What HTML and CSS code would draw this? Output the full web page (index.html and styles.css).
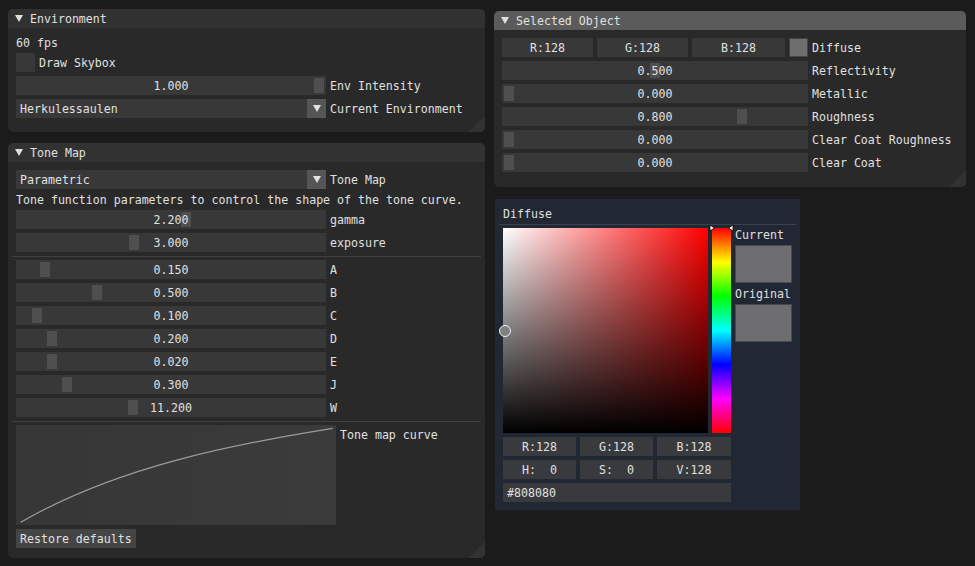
FILE: index.html
```html
<!DOCTYPE html>
<html>
<head>
<meta charset="utf-8">
<link rel="stylesheet" href="styles.css">
</head>
<body>
<div class="win env">
  <div class="title"><span class="tri"></span><span class="ttext">Environment</span></div>
  <div class="content">
    <div class="text">60 fps</div>
    <div class="row"><div class="frame check"></div><span class="label">Draw Skybox</span></div>
    <div class="row"><div class="frame slider w310"><div class="grab" style="left:298px"></div><span class="val">1.000</span></div><span class="label">Env Intensity</span></div>
    <div class="row"><div class="frame combo w310"><span class="ctext">Herkulessaulen</span><span class="arrow"><span class="tri"></span></span></div><span class="label">Current Environment</span></div>
  </div>
</div>

<div class="win tone">
  <div class="title"><span class="tri"></span><span class="ttext">Tone Map</span></div>
  <div class="content">
    <div class="row"><div class="frame combo w310"><span class="ctext">Parametric</span><span class="arrow"><span class="tri"></span></span></div><span class="label">Tone Map</span></div>
    <div class="text">Tone function parameters to control the shape of the tone curve.</div>
    <div class="row"><div class="frame slider w310"><div class="grab" style="left:165px"></div><span class="val">2.200</span></div><span class="label">gamma</span></div>
    <div class="row"><div class="frame slider w310"><div class="grab" style="left:113px"></div><span class="val">3.000</span></div><span class="label">exposure</span></div>
    <div class="sep"></div>
    <div class="row"><div class="frame slider w310"><div class="grab" style="left:24px"></div><span class="val">0.150</span></div><span class="label">A</span></div>
    <div class="row"><div class="frame slider w310"><div class="grab" style="left:76px"></div><span class="val">0.500</span></div><span class="label">B</span></div>
    <div class="row"><div class="frame slider w310"><div class="grab" style="left:16px"></div><span class="val">0.100</span></div><span class="label">C</span></div>
    <div class="row"><div class="frame slider w310"><div class="grab" style="left:31px"></div><span class="val">0.200</span></div><span class="label">D</span></div>
    <div class="row"><div class="frame slider w310"><div class="grab" style="left:31px"></div><span class="val">0.020</span></div><span class="label">E</span></div>
    <div class="row"><div class="frame slider w310"><div class="grab" style="left:46px"></div><span class="val">0.300</span></div><span class="label">J</span></div>
    <div class="row"><div class="frame slider w310"><div class="grab" style="left:112px"></div><span class="val">11.200</span></div><span class="label">W</span></div>
    <div class="sep"></div>
    <div class="plotrow">
      <div class="plot">
        <svg width="320" height="100" viewBox="0 0 320 100"><path d="M4.7,97.3 C100,42 216.7,19.3 316.7,3.3" fill="none" stroke="#9b9b9b" stroke-width="1.2"/></svg>
      </div>
      <span class="plotlabel">Tone map curve</span>
    </div>
    <div class="row"><div class="button">Restore defaults</div></div>
  </div>
</div>

<div class="win sel">
  <div class="title"><span class="tri"></span><span class="ttext">Selected Object</span></div>
  <div class="content">
    <div class="row">
      <div class="rgb">
        <div class="frame num w91">R:128</div>
        <div class="frame num w91">G:128</div>
        <div class="frame num w93">B:128</div>
        <div class="swatch-sm"></div>
      </div>
      <span class="label">Diffuse</span>
    </div>
    <div class="row"><div class="frame slider w306"><div class="grab" style="left:148px"></div><span class="val">0.500</span></div><span class="label">Reflectivity</span></div>
    <div class="row"><div class="frame slider w306"><div class="grab" style="left:2px"></div><span class="val">0.000</span></div><span class="label">Metallic</span></div>
    <div class="row"><div class="frame slider w306"><div class="grab" style="left:235px"></div><span class="val">0.800</span></div><span class="label">Roughness</span></div>
    <div class="row"><div class="frame slider w306"><div class="grab" style="left:2px"></div><span class="val">0.000</span></div><span class="label">Clear Coat Roughness</span></div>
    <div class="row"><div class="frame slider w306"><div class="grab" style="left:2px"></div><span class="val">0.000</span></div><span class="label">Clear Coat</span></div>
  </div>
</div>

<div class="popup">
  <div class="text">Diffuse</div>
  <div class="psep"></div>
  <div class="picker">
    <div class="sv"><div class="cursor"></div></div>
    <div class="hue">
      <svg class="markers" width="25" height="8" viewBox="0 0 25 8">
        <polygon points="1,1 5.5,4 1,7" fill="#fff" stroke="#000" stroke-width="0.8"/>
        <polygon points="24,1 19.5,4 24,7" fill="#fff" stroke="#000" stroke-width="0.8"/>
      </svg>
    </div>
    <div class="side">
      <div class="text">Current</div>
      <div class="swatch"></div>
      <div class="text">Original</div>
      <div class="swatch"></div>
    </div>
  </div>
  <div class="prow">
    <div class="pframe num w73">R:128</div>
    <div class="pframe num w73">G:128</div>
    <div class="pframe num w74">B:128</div>
  </div>
  <div class="prow">
    <div class="pframe num w73">H:  0</div>
    <div class="pframe num w73">S:  0</div>
    <div class="pframe num w74">V:128</div>
  </div>
  <div class="pframe hex">#808080</div>
</div>
</body>
</html>
```

FILE: styles.css
```css
* { box-sizing: border-box; }
html, body { margin: 0; padding: 0; }
body {
  width: 975px;
  height: 566px;
  background: #1b1b1b;
  font-family: "DejaVu Sans Mono", "Liberation Mono", monospace;
  font-size: 11.6px;
  color: #e0e0e0;
  position: relative;
  overflow: hidden;
}

.win {
  position: absolute;
  background: #292929;
  border-radius: 5px;
  overflow: hidden;
}
.win::after {
  content: "";
  position: absolute;
  right: 0;
  bottom: 0;
  width: 16px;
  height: 16px;
  background: linear-gradient(135deg, transparent 50%, #323232 50%);
}
.env { left: 8px; top: 9px; width: 477px; height: 123px; }
.tone { left: 8px; top: 143px; width: 477px; height: 415px; }
.sel { left: 494px; top: 11px; width: 472px; height: 176px; }

.title {
  height: 19px;
  line-height: 19px;
  background: #313131;
  display: flex;
  align-items: center;
  padding-left: 7px;
  gap: 7px;
  white-space: pre;
}
.tone .title { background: #323232; }
.sel .title { background: #5b5b5b; }
.ttext { position: relative; top: 1px; }

.tri {
  display: block;
  width: 0;
  height: 0;
  border-left: 4px solid transparent;
  border-right: 4px solid transparent;
  border-top: 7px solid #e0e0e0;
}

.content {
  padding: 8px;
  display: flex;
  flex-direction: column;
  gap: 4px;
}
.text { height: 13px; line-height: 13px; padding-top: 1px; white-space: pre; }
.row { display: flex; gap: 4px; align-items: center; height: 19px; }
.label { line-height: 19px; white-space: pre; position: relative; top: 1px; }

.frame {
  background: #383838;
  height: 19px;
  line-height: 19px;
  position: relative;
  white-space: pre;
}
.w310 { width: 310px; }
.w306 { width: 306px; }
.w91 { width: 91px; }
.w93 { width: 93px; }
.w73 { width: 73px; }
.w74 { width: 74px; }

.check { width: 19px; }

.slider { text-align: center; }
.grab {
  position: absolute;
  top: 2px;
  width: 10px;
  height: 15px;
  background: #4f4f4f;
}
.val { position: relative; top: 1px; }

.combo { display: flex; justify-content: space-between; }
.ctext { padding-left: 4px; position: relative; top: 1px; }
.arrow {
  width: 19px;
  height: 19px;
  background: #555555;
  display: flex;
  align-items: center;
  justify-content: center;
}
.arrow .tri {
  border-left-width: 4.5px;
  border-right-width: 4.5px;
  border-top-width: 7px;
}

.sep {
  height: 1px;
  background: #3f3f3f;
  margin: 0 -4px -1px;
}

.plotrow { display: flex; gap: 4px; height: 100px; }
.plot {
  width: 320px;
  height: 100px;
  background: linear-gradient(to right, #363636, #3b3b3b);
}
.plot svg { display: block; }
.plotlabel { padding-top: 4px; line-height: 13px; white-space: pre; }

.button {
  height: 19px;
  line-height: 19px;
  padding: 1px 4px 0;
  background: #454545;
  white-space: pre;
}

.rgb { display: flex; gap: 4px; }
.num { text-align: center; padding-top: 1px; }
.swatch-sm {
  width: 19px;
  height: 19px;
  background: #6e6e6e;
  border: 1px solid #444;
}

.popup {
  position: absolute;
  left: 495px;
  top: 199px;
  width: 305px;
  height: 311px;
  background: #212733;
  padding: 8px;
  display: flex;
  flex-direction: column;
  gap: 4px;
}
.psep {
  height: 1px;
  background: #3a4150;
  margin: 0 -4px -1px;
}
.picker { display: flex; gap: 4px; height: 205px; }
.sv {
  width: 205px;
  height: 205px;
  position: relative;
  background:
    linear-gradient(to top, #000, rgba(0,0,0,0)),
    linear-gradient(to right, #fff, #f00);
}
.cursor {
  position: absolute;
  left: -4px;
  top: 97px;
  width: 12px;
  height: 12px;
  border-radius: 50%;
  border: 1.5px solid #f2f2f2;
  background: #808080;
}
.hue {
  width: 19px;
  height: 205px;
  position: relative;
  background: linear-gradient(to bottom, #f00, #ff0 16.67%, #0f0 33.33%, #0ff 50%, #00f 66.67%, #f0f 83.33%, #f00);
}
.markers {
  position: absolute;
  left: -3px;
  top: -4px;
  display: block;
}
.side {
  width: 57px;
  display: flex;
  flex-direction: column;
  gap: 4px;
}
.swatch {
  width: 57px;
  height: 38px;
  background: #6e6e70;
  border: 1px solid #464951;
}
.prow { display: flex; gap: 4px; }
.pframe {
  background: #393a3d;
  height: 19px;
  line-height: 19px;
  padding-top: 1px;
  white-space: pre;
}
.hex { width: 228px; padding-left: 4px; }
```
